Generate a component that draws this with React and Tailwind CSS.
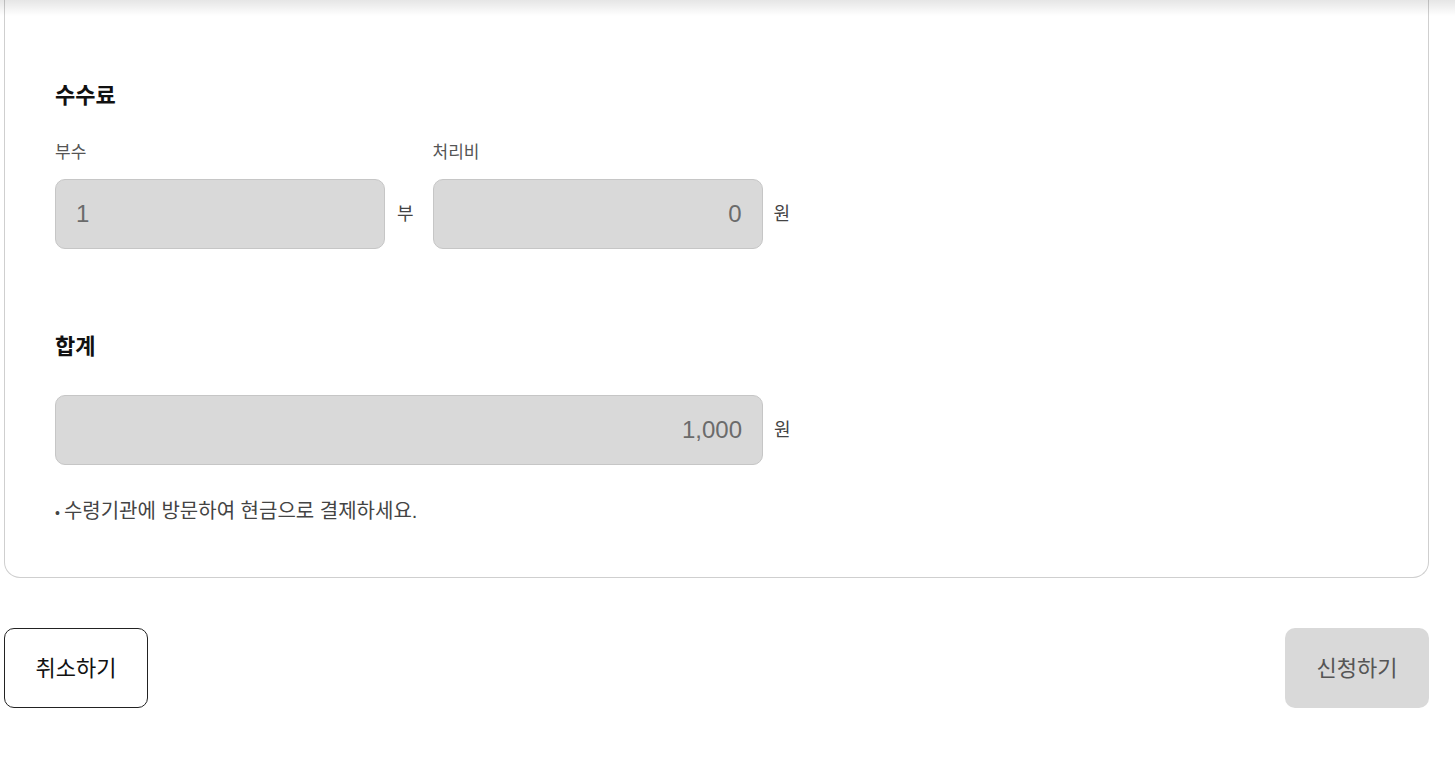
const font = { fontFamily: '"Liberation Sans", "Noto Sans CJK KR", sans-serif' };

function Field({ value, align = 'left', width = 'w-[330px]' }) {
  return (
    <div
      className={`${width} h-[70px] flex items-center rounded-[10px] border border-[#c6c6c6] bg-[#d9d9d9] px-5 text-[24px] text-[#6b6b6b] ${
        align === 'right' ? 'justify-end' : 'justify-start'
      }`}
    >
      {value}
    </div>
  );
}

export default function App() {
  return (
    <div className="relative min-h-screen bg-white" style={font}>
      {/* header shadow */}
      <div className="pointer-events-none absolute inset-x-0 top-0 h-4 bg-gradient-to-b from-black/10 to-transparent" />

      <div className="ml-1 w-[1425px]">
        <div className="rounded-b-2xl border-x border-b border-[#cfcfcf] pl-[50px] pt-[82px] pb-[51px]">
          <h2 className="text-[22px] leading-7 font-bold text-[#111]">수수료</h2>

          <div className="mt-[31px] flex items-end">
            <div>
              <div className="text-[17px] leading-6 text-[#555]">부수</div>
              <div className="mt-[14px] flex items-center">
                <Field value="1" />
                <span className="ml-3 text-[18px] text-[#444]">부</span>
              </div>
            </div>
            <div className="ml-[19px]">
              <div className="text-[17px] leading-6 text-[#555]">처리비</div>
              <div className="mt-[14px] flex items-center">
                <Field value="0" align="right" />
                <span className="ml-[11px] text-[18px] text-[#444]">원</span>
              </div>
            </div>
          </div>

          <h2 className="mt-[84px] text-[22px] leading-7 font-bold text-[#111]">합계</h2>
          <div className="mt-[34px] flex items-center">
            <Field value="1,000" align="right" width="w-[708px]" />
            <span className="ml-[11px] text-[18px] text-[#444]">원</span>
          </div>

          <p className="mt-[33px] text-[20px] leading-[26px] text-[#444]">
            <span className="mr-1 text-[14px]">•</span>수령기관에 방문하여 현금으로 결제하세요.
          </p>
        </div>

        <div className="mt-[50px] flex justify-between">
          <button className="h-20 w-[144px] rounded-[10px] border border-[#222] bg-white text-[22px] text-[#111]">
            취소하기
          </button>
          <button className="h-20 w-[144px] rounded-[10px] bg-[#d9d9d9] text-[22px] text-[#555]">
            신청하기
          </button>
        </div>
      </div>
    </div>
  );
}
